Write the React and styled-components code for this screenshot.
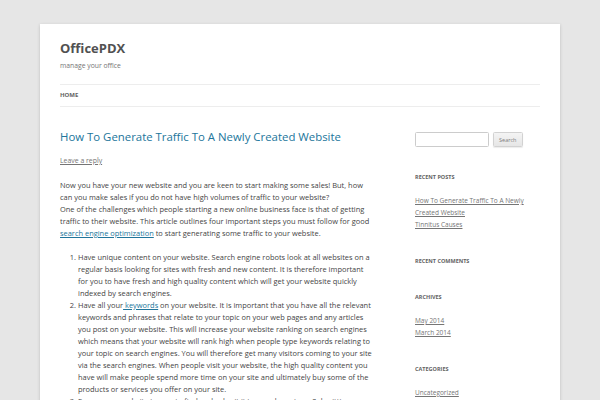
import styled, { createGlobalStyle } from 'styled-components';

const GlobalStyle = createGlobalStyle`
  html, body {
    margin: 0;
    padding: 0;
    background: #e6e6e6;
  }
  body {
    font-family: 'Open Sans', 'Liberation Sans', Helvetica, Arial, sans-serif;
    color: #444;
    -webkit-font-smoothing: antialiased;
  }
`;

const Site = styled.div`
  width: 480px;
  margin: 24px auto 0;
  padding: 0 20px 40px;
  background: #fff;
  box-shadow: 0 1px 3px rgba(100, 100, 100, 0.3);
`;

const Header = styled.header`
  padding: 15px 0 12px;
`;

const SiteTitle = styled.h1`
  margin: 0 0 3px;
  font-size: 13px;
  line-height: 18px;
  font-weight: bold;
  color: #515151;
`;

const Tagline = styled.h2`
  margin: 0;
  font-size: 6.8px;
  line-height: 12px;
  font-weight: normal;
  color: #757575;
`;

const Nav = styled.nav`
  margin-top: 12px;
  border-top: 1px solid #ededed;
  border-bottom: 1px solid #ededed;

  ul {
    margin: 0;
    padding: 0;
    list-style: none;
    display: flex;
  }
`;

const NavItem = styled.li`
  margin-right: 20px;
  font-size: 6px;
  line-height: 21px;
  text-transform: uppercase;
  font-weight: ${(p) => (p.current ? 'bold' : 'normal')};
  color: ${(p) => (p.current ? '#636363' : '#6a6a6a')};
`;

const Main = styled.div`
  display: flex;
  justify-content: space-between;
  align-items: flex-start;
  margin-top: 12px;
`;

const Content = styled.main`
  width: 315px;
`;

const EntryHeader = styled.header`
  margin-bottom: 12px;
`;

const EntryTitle = styled.h1`
  margin: 0;
  font-size: 11.4px;
  line-height: 12px;
  font-weight: normal;
  color: #21759b;
`;

const CommentsLink = styled.div`
  margin-top: 12px;
  font-size: 6.9px;
  line-height: 12px;

  a {
    color: #757575;
    text-decoration: underline;
  }
`;

const Entry = styled.div`
  font-size: 7.45px;
  line-height: 12px;
  color: #444;

  p {
    margin: 0 0 12px;
  }

  a {
    color: #21759b;
    text-decoration: underline;
  }

  ol {
    margin: 0 0 12px;
    padding-left: 18px;
  }
`;

const Sidebar = styled.aside`
  width: 125px;
  padding-top: 1px;
`;

const Widget = styled.section`
  margin-bottom: 24px;
`;

const SearchForm = styled.form`
  display: flex;
  align-items: center;
  gap: 3.5px;
`;

const SearchInput = styled.input`
  box-sizing: border-box;
  width: 74px;
  height: 15px;
  padding: 3px;
  border: 1px solid #ccc;
  border-radius: 1.5px;
  font-family: inherit;
  font-size: 6px;
  outline: none;
`;

const SearchButton = styled.button`
  box-sizing: border-box;
  width: 30.5px;
  height: 15px;
  padding: 0;
  border: 1px solid #d2d2d2;
  border-radius: 1.5px;
  background: linear-gradient(to bottom, #f4f4f4, #e6e6e6);
  box-shadow: 0 1px 1px rgba(64, 64, 64, 0.1);
  font-family: inherit;
  font-size: 5.5px;
  color: #7c7c7c;
`;

const WidgetTitle = styled.h3`
  margin: 0 0 12px;
  font-size: 5.5px;
  line-height: 12px;
  font-weight: bold;
  text-transform: uppercase;
  color: #636363;
`;

const WidgetList = styled.ul`
  margin: 0;
  padding: 0;
  list-style: none;

  li {
    font-size: 6.5px;
    line-height: 12px;
  }

  a {
    color: #757575;
    text-decoration: underline;
  }
`;

const widgets = [
  {
    title: 'Recent Posts',
    items: ['How To Generate Traffic To A Newly Created Website', 'Tinnitus Causes'],
  },
  { title: 'Recent Comments', items: [] },
  { title: 'Archives', items: ['May 2014', 'March 2014'] },
  { title: 'Categories', items: ['Uncategorized'] },
];

export default function App() {
  return (
    <>
      <GlobalStyle />
      <Site>
        <Header>
          <SiteTitle>OfficePDX</SiteTitle>
          <Tagline>manage your office</Tagline>
          <Nav>
            <ul>
              <NavItem current>Home</NavItem>
            </ul>
          </Nav>
        </Header>

        <Main>
          <Content>
            <article>
              <EntryHeader>
                <EntryTitle>How To Generate Traffic To A Newly Created Website</EntryTitle>
                <CommentsLink>
                  <a href="#">Leave a reply</a>
                </CommentsLink>
              </EntryHeader>
              <Entry>
                <p>
                  Now you have your new website and you are keen to start making some sales! But, how
                  can you make sales if you do not have high volumes of traffic to your website?
                  <br />
                  One of the challenges which people starting a new online business face is that of
                  getting traffic to their website. This article outlines four important steps you
                  must follow for good <a href="#">search engine optimization</a> to start generating
                  some traffic to your website.
                </p>
                <ol>
                  <li>
                    Have unique content on your website. Search engine robots look at all websites on a
                    regular basis looking for sites with fresh and new content. It is therefore
                    important for you to have fresh and high quality content which will get your
                    website quickly indexed by search engines.
                  </li>
                  <li>
                    Have all your<a href="#"> keywords</a> on your website. It is important that you
                    have all the relevant keywords and phrases that relate to your topic on your web
                    pages and any articles you post on your website. This will increase your website
                    ranking on search engines which means that your website will rank high when people
                    type keywords relating to your topic on search engines. You will therefore get many
                    visitors coming to your site via the search engines. When people visit your
                    website, the high quality content you have will make people spend more time on your
                    site and ultimately buy some of the products or services you offer on your site.
                  </li>
                  <li>
                    Ensure your website is easy to find and submit it to search engines. Submitting
                    your site helps the robots find it sooner.
                  </li>
                </ol>
              </Entry>
            </article>
          </Content>

          <Sidebar>
            <Widget>
              <SearchForm onSubmit={(e) => e.preventDefault()}>
                <SearchInput type="text" aria-label="Search for" />
                <SearchButton type="submit">Search</SearchButton>
              </SearchForm>
            </Widget>
            {widgets.map((w) => (
              <Widget key={w.title}>
                <WidgetTitle>{w.title}</WidgetTitle>
                <WidgetList>
                  {w.items.map((item) => (
                    <li key={item}>
                      <a href="#">{item}</a>
                    </li>
                  ))}
                </WidgetList>
              </Widget>
            ))}
          </Sidebar>
        </Main>
      </Site>
    </>
  );
}
